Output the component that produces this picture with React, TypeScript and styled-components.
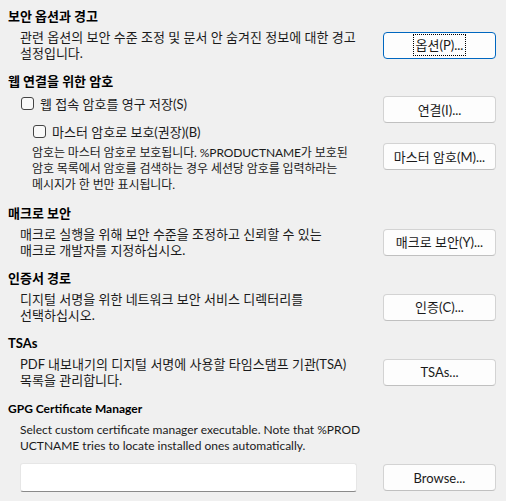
import styled, { createGlobalStyle } from "styled-components";

const GlobalStyle = createGlobalStyle`
  html, body {
    margin: 0;
    padding: 0;
    background: #f0f0f0;
  }
  body {
    font-family: Lato, "Noto Sans CJK KR", sans-serif;
    font-size: 13px;
    color: #1a1a1a;
  }
`;

type Section = {
  title: string;
  lines: string[];
  button: string;
};

const simpleSections: Section[] = [
  {
    title: "매크로 보안",
    lines: [
      "매크로 실행을 위해 보안 수준을 조정하고 신뢰할 수 있는",
      "매크로 개발자를 지정하십시오.",
    ],
    button: "매크로 보안(Y)...",
  },
  {
    title: "인증서 경로",
    lines: [
      "디지털 서명을 위한 네트워크 보안 서비스 디렉터리를",
      "선택하십시오.",
    ],
    button: "인증(C)...",
  },
  {
    title: "TSAs",
    lines: [
      "PDF 내보내기의 디지털 서명에 사용할 타임스탬프 기관(TSA)",
      "목록을 관리합니다.",
    ],
    button: "TSAs...",
  },
];

function Lines({ lines, $size }: { lines: string[]; $size?: number }) {
  return (
    <Desc $size={$size}>
      {lines.map((l) => (
        <Line key={l}>{l}</Line>
      ))}
    </Desc>
  );
}

function App() {
  return (
    <>
      <GlobalStyle />
      <Page>
        <Group>
          <Heading>보안 옵션과 경고</Heading>
          <Body>
            <Lines
              lines={[
                "관련 옵션의 보안 수준 조정 및 문서 안 숨겨진 정보에 대한 경고",
                "설정입니다.",
              ]}
            />
            <Button $focused>
              <Label $focused>옵션(P)...</Label>
            </Button>
          </Body>
        </Group>

        <Group>
          <Heading>웹 연결을 위한 암호</Heading>
          <Body $align="start" $top={4}>
            <div>
              <CheckRow>
                <Box />
                웹 접속 암호를 영구 저장(S)
              </CheckRow>
              <CheckRow $indent>
                <Box />
                마스터 암호로 보호(권장)(B)
              </CheckRow>
              <Nested>
                <Lines
                  $size={12}
                  lines={[
                    "암호는 마스터 암호로 보호됩니다. %PRODUCTNAME가 보호된",
                    "암호 목록에서 암호를 검색하는 경우 세션당 암호를 입력하라는",
                    "메시지가 한 번만 표시됩니다.",
                  ]}
                />
              </Nested>
            </div>
            <ButtonStack>
              <Button>
                <Label>연결(I)...</Label>
              </Button>
              <Button>
                <Label>마스터 암호(M)...</Label>
              </Button>
            </ButtonStack>
          </Body>
        </Group>

        {simpleSections.map((s) => (
          <Group key={s.title}>
            <Heading>{s.title}</Heading>
            <Body>
              <Lines lines={s.lines} />
              <Button>
                <Label>{s.button}</Label>
              </Button>
            </Body>
          </Group>
        ))}

        <Group $extra={1}>
          <Heading $size={12}>GPG Certificate Manager</Heading>
          <Body $cols="1fr">
            <Lines
              $size={12}
              lines={[
                "Select custom certificate manager executable. Note that %PROD",
                "UCTNAME tries to locate installed ones automatically.",
              ]}
            />
          </Body>
          <Body $top={9}>
            <PathInput type="text" />
            <Button>
              <Label>Browse...</Label>
            </Button>
          </Body>
        </Group>
      </Page>
    </>
  );
}

const Page = styled.div`
  display: flex;
  flex-direction: column;
  gap: 12px;
  padding: 8px 10px 0 8px;
  width: 506px;
  box-sizing: border-box;
`;

const Group = styled.section<{ $extra?: number }>`
  display: flex;
  flex-direction: column;
  margin-top: ${(p) => p.$extra ?? 0}px;
`;

const Heading = styled.div<{ $size?: number }>`
  font-weight: 700;
  font-size: ${(p) => p.$size ?? 13}px;
  line-height: 16px;
  color: #000;
`;

const Body = styled.div<{ $align?: string; $top?: number; $cols?: string }>`
  display: grid;
  grid-template-columns: ${(p) => p.$cols ?? "1fr 113px"};
  align-items: ${(p) => p.$align ?? "center"};
  padding-left: 12px;
  margin-top: ${(p) => p.$top ?? 5}px;
`;

const Desc = styled.div<{ $size?: number }>`
  font-size: ${(p) => p.$size ?? 13}px;
  line-height: 16px;
`;

const Line = styled.span`
  display: block;
  white-space: nowrap;
`;

const Nested = styled.div`
  padding-left: 12px;
  margin-top: 4px;
  letter-spacing: -0.1px;
`;

const CheckRow = styled.label<{ $indent?: boolean }>`
  display: flex;
  align-items: center;
  gap: 6px;
  height: 20px;
  margin-left: ${(p) => (p.$indent ? 13 : 1)}px;
  margin-bottom: ${(p) => (p.$indent ? 0 : 8)}px;
  white-space: nowrap;
`;

const Box = styled.span`
  width: 11px;
  height: 11px;
  border: 1px solid #444;
  border-radius: 3px;
  background: #f9f9f9;
  flex: none;
`;

const ButtonStack = styled.div`
  display: flex;
  flex-direction: column;
  gap: 20px;
  padding-top: 3px;
`;

const Button = styled.button<{ $focused?: boolean }>`
  width: 113px;
  height: 27px;
  display: flex;
  align-items: center;
  justify-content: center;
  padding: 0;
  font: inherit;
  font-size: 13px;
  color: #1a1a1a;
  background: #fdfdfd;
  border: 1px solid ${(p) => (p.$focused ? "#0067c0" : "#d3d3d3")};
  border-bottom-color: ${(p) => (p.$focused ? "#0067c0" : "#c0c0c0")};
  border-radius: 4px;
`;

const Label = styled.span<{ $focused?: boolean }>`
  padding: 2px 2px;
  line-height: 16px;
  outline: ${(p) => (p.$focused ? "1px dotted #000" : "none")};
`;

const PathInput = styled.input`
  width: 337px;
  height: 29px;
  box-sizing: border-box;
  background: #fff;
  border: 1px solid #e6e6e6;
  border-bottom: 1px solid #8a8a8a;
  border-radius: 3px;
  font: inherit;
`;

export default App;
